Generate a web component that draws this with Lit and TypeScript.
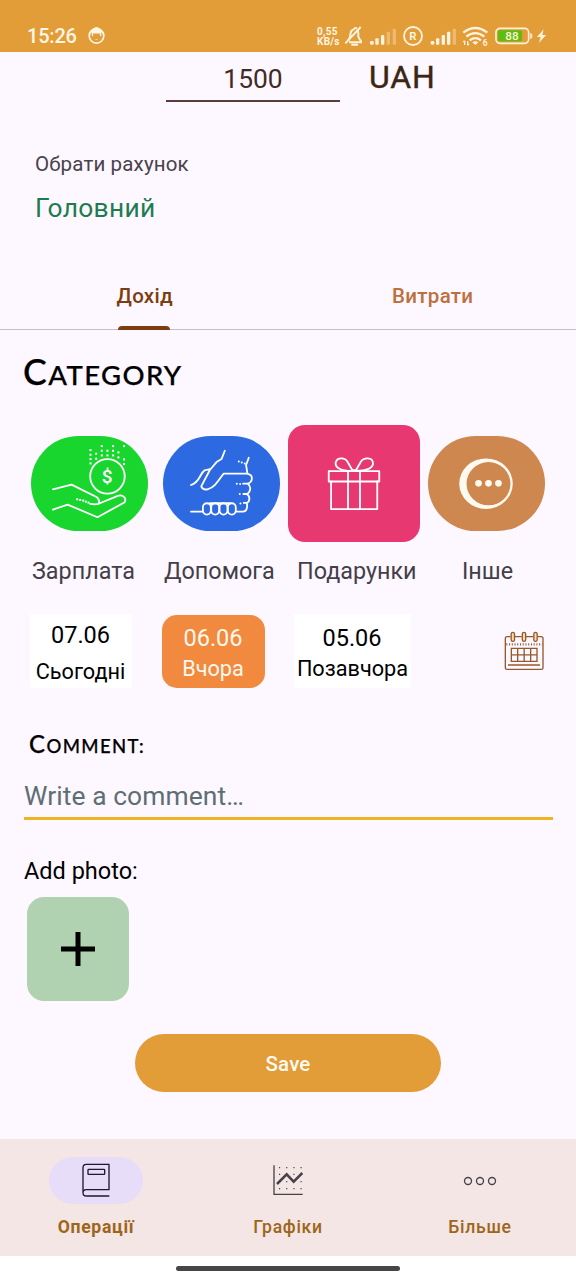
import { LitElement, html, css, svg } from "lit";
import { customElement, state } from "lit/decorators.js";
import { classMap } from "lit/directives/class-map.js";

const faceIcon = html`<svg class="face" viewBox="0 0 50 50"><circle cx="25" cy="26" r="21.5" fill="none" stroke="#fff6e4" stroke-width="5"/><path d="M5 22C8 8 17 2 25 0C33 2 42 8 45 22L39 15V26Q37 29 35 26V19H15V26Q13 29 11 26V15Z" fill="#fff6e4"/><path d="M22 37H28" stroke="#fff6e4" stroke-width="2"/></svg>`;

const systemIcons = html`<svg class="system" viewBox="168 70 614 72" fill="none" stroke="#fff3dd" stroke-width="5.500">
  <path d="M181 121V118Q187 113 187 103Q187 88 200 85M207 86Q211 90 211 99V108Q213 114 219 121V125H183M190 132H210" stroke-width="6"/>
  <path d="M199 85Q201 79 207 84" /><path d="M172 128L218 79" stroke-width="6"/>
  <g stroke="none" fill="#fff3dd"><rect x="246" y="121" width="11" height="11" rx="4"/><rect x="262" y="113" width="10" height="19" rx="3"/><rect x="279" y="103" width="10" height="29" rx="3"/><rect x="296" y="93" width="10" height="39" rx="3" opacity=".35"/><rect x="314" y="84" width="10" height="48" rx="3" opacity=".35"/>
  <rect x="428" y="121" width="11" height="11" rx="4"/><rect x="444" y="113" width="10" height="19" rx="3"/><rect x="461" y="103" width="10" height="29" rx="3"/><rect x="477" y="93" width="10" height="39" rx="3"/><rect x="494" y="84" width="10" height="48" rx="3" opacity=".35"/></g>
  <circle cx="375" cy="106" r="27"/>
  <path d="M526 96Q562 68 598 96M535 108Q562 87 589 108M545 119Q562 106 579 119" stroke-width="7"/>
  <path d="M553 125Q562 118 571 125L562 133Z" fill="#fff3dd" stroke="none"/>
  <path d="M530 133V120M526 124L530 120M539 121V134M543 130L539 134" stroke-width="4"/>
  <rect x="624" y="83" width="98" height="45" rx="12" stroke-width="5"/><rect x="630" y="89" width="72" height="33" rx="5" fill="#5fbd0c" stroke="none"/>
  <path d="M728 98V114Q732 112 732 106T728 98" fill="#fff3dd" stroke-width="2"/><path d="M767 86L747 109H758L753 127L774 103H763Z" fill="#fff3dd" stroke="none"/>
  <g fill="#fff3dd" stroke="none" class="glyphs"><text x="364" y="118" font-size="34">R</text><text x="584" y="135" font-size="25">6</text><text x="652" y="119" font-size="35" font-weight="500">88</text></g>
</svg>`;

const salaryDots = [[212,104],[212,118],[212,131],[212,144],[229,115],[229,130],[246,92],[246,106],[246,120],[263,106],[263,120],[280,92],[280,106],[280,120],[296,111],[296,126],[313,92],[313,132],[313,146],[172,252],[181,254],[190,256],[198,259],[206,262]];

const categories = [
  { key: "green", label: "Зарплата", icon: html`<svg viewBox="33 62 352 285" class="line"><path d="M99 222L155 208L230 245Q240 251 237 266M99 283L143 268L233 306L315 261Q321 246 306 241Q301 239 294 242L240 264Q231 269 211 266"/><circle cx="263" cy="183" r="52"/><g class="dots">${salaryDots.map(([x, y]) => svg`<rect x=${x - 3} y=${y - 3} width="6" height="6"/>`)}</g><text class="dollar" x="246" y="204">$</text></svg>` },
  { key: "blue", label: "Допомога", icon: html`<svg viewBox="429 62 352 285" class="line"><path d="M615 106L605 131L590 140L570 164L544 213Q549 225 563 222C582 217 591 203 611 175H681C704 178 698 201 684 205C696 214 692 231 681 236C692 243 691 258 681 263C684 275 681 290 669 289H650M571 161L554 165C539 175 541 200 513 209M687 127L679 149L683 175M681 205H670M681 236H671M681 263H672M513 289H548M570 264H632"/><rect x="549" y="264" width="24" height="34" rx="12"/><rect x="574" y="264" width="24" height="34" rx="12"/><rect x="599" y="264" width="24" height="34" rx="12"/><rect x="624" y="264" width="24" height="34" rx="12"/><g class="dots"><circle cx="657" cy="138" r="3"/><circle cx="666" cy="141" r="3"/><circle cx="675" cy="144" r="3"/><circle cx="651" cy="205" r="3"/><circle cx="661" cy="206" r="3"/><circle cx="660" cy="236" r="3"/><circle cx="662" cy="265" r="3"/></g></svg>` },
  { key: "pink", label: "Подарунки", icon: html`<svg viewBox="24 29 396 352" class="line"><rect x="146" y="168" width="152" height="31"/><path d="M153 199V282H292V199M204 168V282M240 168V282M215 167C185 167 164 158 167 142C171 125 195 126 202 139L217 165H228L243 139C251 126 278 125 279 143C281 159 259 167 228 167"/></svg>` },
  { key: "brown", label: "Інше", icon: html`<svg viewBox="444 62 352 285"><path fill="#fffaf0" fill-rule="evenodd" d="M538 205A80.500 76 0 0 1 699 205A80.500 76 0 0 1 538 205ZM560 205A66 65 0 0 0 692 205A66 65 0 0 0 560 205Z"/><g fill="#fffaf0"><circle cx="596" cy="204" r="10"/><circle cx="626" cy="204" r="10"/><circle cx="656" cy="204" r="10"/></g></svg>` },
];

const dates = [
  { date: "07.06", name: "Сьогодні", key: "today" },
  { date: "06.06", name: "Вчора", key: "yesterday" },
  { date: "05.06", name: "Позавчора", key: "before" },
];

const calendarIcon = html`<svg class="calendar" viewBox="672 78 120 120" fill="none" stroke="#96592b" stroke-width="4"><path d="M692 95H681Q676 95 676 101V188Q676 193 681 193H784Q789 193 789 188V101Q789 95 784 95H773M704 95H725M738 95H760"/><g fill="#fbdcae"><rect x="693.500" y="82" width="10" height="27" rx="5"/><rect x="727" y="82" width="10" height="27" rx="5"/><rect x="761.500" y="82" width="10" height="27" rx="5"/></g><path d="M679 118H787" stroke-width="7" stroke-dasharray="3 5.200"/><path d="M694 130H771V169H694ZM694 149.500H771M713 130V169M732.500 130V169M752 130V169M684 180H780"/></svg>`;

const navItems = [
  { label: "Операції", icon: html`<svg viewBox="0 0 282 141" fill="none" stroke="#1d1730" stroke-width="4"><path d="M181 22H112Q102 22 102 32V107Q102 117 112 117H181M180 22V98H112Q102 98 102 108"/><rect x="117" y="37" width="50" height="15" rx="2"/></svg>` },
  { label: "Графіки", icon: html`<svg viewBox="723 81 282 141" fill="none" stroke="#47424a"><path d="M822 106V193H908" stroke-width="4"/><path d="M831 162L860 133L881 155L907 129" stroke-width="7.500"/><path d="M837 113H908M837 133H908M837 155H908M837 176H908" stroke-width="3.500" stroke-dasharray="3.500 18"/></svg>` },
  { label: "Більше", icon: html`<svg viewBox="159 51 282 141" fill="none" stroke="#47424a" stroke-width="4"><circle cx="264" cy="123" r="10.500"/><circle cx="300" cy="123" r="10.500"/><circle cx="336" cy="123" r="10.500"/></svg>` },
];

@customElement("app-root")
export class AppRoot extends LitElement {
  @state() private category = "pink";
  @state() private day = "yesterday";

  static styles = css`
    :host { display: flex; flex-direction: column; width: 576px; height: 1280px; overflow: hidden; background: #fdf7ff; font-family: Roboto, sans-serif; color: #000; white-space: nowrap; }
    * { box-sizing: border-box; }
    svg { display: block; }
    .status { height: 52px; flex: none; background: #e29c38; color: #fff6e4; display: flex; align-items: flex-start; padding: 24px 0 0 27px; }
    .clock { font-size: 20px; line-height: 24px; font-weight: 500; width: 61px; letter-spacing: -.2px; }
    .face { width: 17px; height: 17px; margin-top: 3px; }
    .speed { font-size: 10px; font-weight: 700; margin: 2px 0 0 212px; width: 27px; letter-spacing: .3px; display: grid; grid-template-rows: 10px 10px; line-height: 12px; }
    .system { width: 204.670px; height: 24px; margin-top: -.5px; }
    .glyphs { font-family: Roboto, sans-serif; font-weight: 700; }
    .amount { display: flex; padding-left: 166px; height: 50px; flex: none; }
    .value { width: 174px; border-bottom: 2px solid #5b3c3b; text-align: center; font-size: 26.400px; line-height: 54px; color: #432a24; }
    .currency { margin-left: 29px; font-size: 32px; line-height: 50px; color: #3a2613; letter-spacing: .8px; -webkit-text-stroke: .4px #3a2613; }
    .account { margin: 48px 0 0 35px; font-size: 20.500px; line-height: 29px; color: #48424c; letter-spacing: .15px; }
    .account-name { margin: 12px 0 0 35px; font-size: 26.400px; line-height: 34px; color: #1c7c50; letter-spacing: .3px; }
    .tabs { display: grid; grid-template-columns: 1fr 1fr; height: 66px; flex: none; margin-top: 39px; border-bottom: 1px solid #c5bfc7; }
    .tab { display: flex; flex-direction: column; align-items: center; font-weight: 500; font-size: 20.500px; line-height: 65px; color: #bc703c; letter-spacing: .3px; text-indent: 1.500px; }
    .tab.on { color: #7c3d10; }
    .tab.on::after { content: ""; width: 52px; height: 4px; margin-top: -3px; background: #7c3d10; border-radius: 4px 4px 0 0; }
    .heading { font-family: Lato, sans-serif; text-transform: uppercase; font-weight: 500; letter-spacing: 1.400px; -webkit-text-stroke: .25px #000; }
    .heading::first-letter { font-size: 1.300em; }
    .title { margin: 20px 0 0 23px; font-size: 27.500px; height: 44px; line-height: 44px; }
    .categories { display: grid; grid-template-columns: repeat(4, 132px); height: 117px; margin: 31px 0 0 24px; align-items: center; justify-items: center; flex: none; }
    .shape { width: 117px; height: 95px; border-radius: 47.500px; overflow: hidden; }
    .shape svg { width: 100%; height: 100%; }
    .green { background: #19d62f; } .blue { background: #2d6ae2; } .pink { background: #e73871; } .brown { background: #cd874f; }
    .green, .blue { margin-right: 1px; }
    .shape.selected { width: 132px; height: 117px; border-radius: 17px; }
    .line { fill: none; stroke: #fff; stroke-width: 5.500; stroke-linejoin: round; stroke-linecap: round; }
    .dots, .dollar { fill: #fff; stroke: none; }
    .dollar { font: 500 57px Roboto, sans-serif; }
    .labels { display: grid; grid-template-columns: 132px 133px 165px auto; margin: 15px 0 0 32px; font-size: 23.350px; line-height: 29px; color: #443e49; }
    .dates { display: flex; height: 74px; margin: 28px 0 0 30px; flex: none; }
    .chip { background: #fff; width: 102px; text-align: center; border-radius: 2px; }
    .chip.before { width: 117px; margin-left: 29px; padding-top: 9px; }
    .chip.yesterday { width: 103px; margin-left: 30px; padding-top: 8px; }
    .chip.today { padding-top: 6px; }
    .chip.on { background: #f18a3e; color: #fff8ec; border-radius: 15px; height: 73px; margin-top: 1px; }
    .date { font-size: 23.500px; line-height: 30px; text-indent: -1px; }
    .day { font-size: 21.700px; line-height: 31px; }
    .today .date { line-height: 31px; }
    .today .day { line-height: 41px; text-indent: -1px; }
    .yesterday .day { text-indent: -1px; }
    .calendar { width: 40px; height: 40px; margin: 17px 0 0 93px; }
    .comment { margin: 41px 0 0 29px; font-size: 18.500px; height: 30px; line-height: 30px; }
    .input { margin: 14px 23px 0 24px; height: 47px; border-bottom: 3px solid #f0b323; font-size: 26.400px; line-height: 46px; letter-spacing: .08px; color: #5d6e75; flex: none; }
    .photo { margin: 35px 0 0 24px; font-size: 23.500px; line-height: 32px; }
    .add { width: 102px; height: 104px; border-radius: 17px; background: #b1d2b0; margin: 10px 0 0 27px; display: grid; place-items: center; flex: none; }
    .add svg { width: 34px; height: 34px; }
    .save { width: 306px; height: 58px; border-radius: 29px; background: #e29c38; color: #fffaf0; margin: 33px 0 0 135px; text-align: center; font-weight: 500; font-size: 20.500px; line-height: 60px; letter-spacing: .15px; flex: none; }
    .nav { display: grid; grid-template-columns: repeat(3, 1fr); height: 117px; margin-top: 47px; background: #f4e6e5; padding-top: 18px; flex: none; }
    .item { display: flex; flex-direction: column; align-items: center; font-size: 17.600px; font-weight: 500; color: #9e651b; letter-spacing: .7px; line-height: 24px; gap: 11px; }
    .item svg { width: 94px; height: 47px; border-radius: 24px; }
    .item.on { font-weight: 700; }
    .item.on svg { background: #e7ddf9; }
    .gesture { flex: 1; background: #fff; display: flex; justify-content: center; padding-top: 10px; }
    .gesture div { width: 224px; height: 5px; border-radius: 3px; background: #464646; }
  `;

  render() {
    return html`
      <div class="status"><div class="clock">15:26</div>${faceIcon}<div class="speed"><span>0,55</span><span>KB/s</span></div>${systemIcons}</div>
      <div class="amount"><div class="value">1500</div><div class="currency">UAH</div></div>
      <div class="account">Обрати рахунок</div>
      <div class="account-name">Головний</div>
      <div class="tabs"><div class="tab on">Дохід</div><div class="tab">Витрати</div></div>
      <div class="heading title">Category</div>
      <div class="categories">${categories.map((c) => html`<div class=${classMap({ shape: true, [c.key]: true, selected: c.key === this.category })} @click=${() => (this.category = c.key)}>${c.icon}</div>`)}</div>
      <div class="labels">${categories.map((c) => html`<div>${c.label}</div>`)}</div>
      <div class="dates">${dates.map((d) => html`<div class=${classMap({ chip: true, [d.key]: true, on: d.key === this.day })} @click=${() => (this.day = d.key)}><div class="date">${d.date}</div><div class="day">${d.name}</div></div>`)}${calendarIcon}</div>
      <div class="heading comment">Comment:</div>
      <div class="input">Write a comment…</div>
      <div class="photo">Add photo:</div>
      <div class="add"><svg viewBox="0 0 34 34"><path d="M17 0V34M0 17H34" stroke="#000" stroke-width="5"/></svg></div>
      <div class="save">Save</div>
      <div class="nav">${navItems.map((n, i) => html`<div class=${classMap({ item: true, on: i === 0 })}>${n.icon}<div>${n.label}</div></div>`)}</div>
      <div class="gesture"><div></div></div>
    `;
  }
}
